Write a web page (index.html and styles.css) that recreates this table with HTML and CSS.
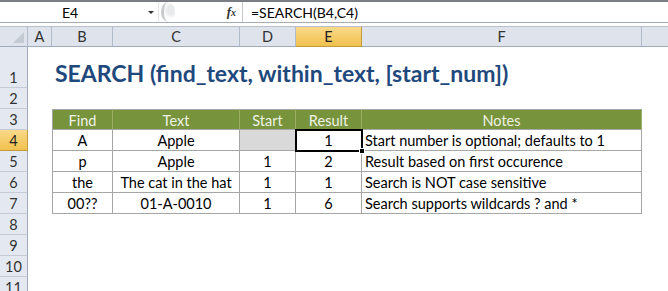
FILE: index.html
```html
<!DOCTYPE html>
<html>
<head>
<meta charset="utf-8">
<link rel="stylesheet" href="styles.css">
</head>
<body>
<div class="app">
  <div class="fbar">
    <div class="namebox"><span class="ref">E4</span><span class="dd"></span></div>
    <div class="mid">
      <span class="grip"></span>
      <span class="fx"><i>f</i><i class="x">x</i></span>
    </div>
    <div class="formula">=SEARCH(B4,C4)</div>
  </div>
  <div class="sheet">
    <div class="corner"><span class="tri"></span></div>
    <div class="ch">A</div><div class="ch">B</div><div class="ch">C</div><div class="ch">D</div><div class="ch sel">E</div><div class="ch">F</div><div class="ch last"></div>

    <div class="rh">1</div>
    <div class="c"></div>
    <div class="c title">SEARCH (find_text, within_text, [start_num])</div>

    <div class="rh">2</div>
    <div class="c blank"></div>

    <div class="rh">3</div>
    <div class="c"></div>
    <div class="t th first">Find</div><div class="t th">Text</div><div class="t th">Start</div><div class="t th">Result</div><div class="t th">Notes</div>
    <div class="c"></div>

    <div class="rh sel">4</div>
    <div class="c"></div>
    <div class="t first">A</div><div class="t">Apple</div><div class="t grey"></div><div class="t active">1<span class="handle"></span></div><div class="t left">Start number is optional; defaults to 1</div>
    <div class="c"></div>

    <div class="rh">5</div>
    <div class="c"></div>
    <div class="t first">p</div><div class="t">Apple</div><div class="t">1</div><div class="t">2</div><div class="t left">Result based on first occurence</div>
    <div class="c"></div>

    <div class="rh">6</div>
    <div class="c"></div>
    <div class="t first">the</div><div class="t">The cat in the hat</div><div class="t">1</div><div class="t">1</div><div class="t left">Search is NOT case sensitive</div>
    <div class="c"></div>

    <div class="rh">7</div>
    <div class="c"></div>
    <div class="t first">00??</div><div class="t">01-A-0010</div><div class="t">1</div><div class="t">6</div><div class="t left">Search supports wildcards ? and *</div>
    <div class="c"></div>

    <div class="rh">8</div><div class="c blank"></div>
    <div class="rh">9</div><div class="c blank"></div>
    <div class="rh">10</div><div class="c blank"></div>
    <div class="rh">11</div><div class="c blank"></div>
  </div>
</div>
</body>
</html>
```
FILE: styles.css
```css
* { box-sizing: border-box; }
html, body { margin: 0; padding: 0; background: #fff; }
body { width: 668px; height: 291px; overflow: hidden; font-family: Lato, "Liberation Sans", Arial, sans-serif; }
.app { width: 668px; height: 291px; display: flex; flex-direction: column; }

.fbar {
  height: 24px;
  display: flex;
  border-top: 2px solid #7a7d82;
  border-bottom: 1px solid #a5acb5;
  background: #fff;
  font-size: 14px;
  color: #000;
}
.namebox {
  width: 158px;
  display: flex;
  align-items: center;
  position: relative;
}
.namebox .ref { width: 140px; text-align: center; }
.namebox .dd {
  width: 0; height: 0;
  border-left: 3px solid transparent;
  border-right: 3px solid transparent;
  border-top: 3px solid #333;
  margin-left: 8px;
}
.mid {
  width: 85px;
  display: flex;
  align-items: center;
  border-left: 1px solid #e3e6ea;
  border-right: 1px solid #c5cad1;
  background: #fff;
  position: relative;
}
.grip {
  width: 14px; height: 20px;
  margin-left: 2px;
  border-radius: 50%;
  border-left: 3px solid #c8cbd0;
  background: radial-gradient(circle at 70% 40%, #e8e9eb 0 30%, #fff 60%);
}
.fx {
  margin-left: auto;
  margin-right: 6px;
  font-family: "Liberation Serif", "Times New Roman", serif;
  font-style: italic;
  font-weight: bold;
  font-size: 13px;
  color: #333;
}
.fx .x { font-size: 10px; }
.formula { padding-left: 8px; display: flex; align-items: center; flex: 1; }

.sheet {
  margin-top: 3px;
  border-top: 1px solid #b9c0cb;
  display: grid;
  grid-template-columns: 28px 24px 61px 127px 56px 66px 280px 26px;
  grid-template-rows: 20px 41px repeat(10, 21px);
  font-size: 14.5px;
  color: #000;
}
.corner {
  background: #dfe4ec;
  border-right: 1px solid #b1bbc9;
  border-bottom: 1px solid #9eabbd;
  position: relative;
}
.corner .tri {
  position: absolute; right: 3px; bottom: 3px;
  width: 0; height: 0;
  border-left: 11px solid transparent;
  border-bottom: 11px solid #c3cad4;
}
.ch {
  background: #dfe4ec;
  border-right: 1px solid #b1bbc9;
  border-bottom: 1px solid #9eabbd;
  display: flex; align-items: center; justify-content: center;
  color: #333;
}
.ch.last { border-right: none; }
.ch.sel, .rh.sel {
  background: linear-gradient(#f9d98a, #f1c14d);
  border-bottom-color: #c29b3e;
  border-right-color: #c29b3e;
  color: #222;
}
.rh {
  grid-column: 1;
  background: #e4e9f1;
  border-right: 1px solid #9eabbd;
  border-bottom: 1px solid #c5ccd8;
  display: flex; align-items: flex-end; justify-content: center;
  padding-bottom: 1px;
  color: #333;
}
.c.blank { grid-column: 2 / -1; }
.title {
  grid-column: 3 / -1;
  font-weight: bold;
  font-size: 23px;
  color: #1f497d;
  display: flex; align-items: flex-end;
  padding-left: 3px;
  padding-bottom: 1px;
  white-space: nowrap;
}
.t {
  border-right: 1px solid #a6a6a6;
  border-bottom: 1px solid #a6a6a6;
  display: flex; align-items: center; justify-content: center;
  padding-top: 1px;
  position: relative;
  white-space: nowrap;
}
.t.first { border-left: 1px solid #a6a6a6; }
.t.th {
  background: #77933c;
  color: #eef2e4;
  border-top: 1px solid #a6a6a6;
  border-right-color: #9bb066;
}
.t.th:last-of-type { border-right-color: #a6a6a6; }
.t.left { justify-content: flex-start; padding-left: 3px; }
.t.grey { background: #d9d9d9; }
.t.active {
  outline: 2px solid #000;
  outline-offset: -1px;
  z-index: 2;
}
.handle {
  position: absolute; right: -4px; bottom: -4px;
  width: 6px; height: 6px;
  background: #000;
  border: 1px solid #fff;
}
```
